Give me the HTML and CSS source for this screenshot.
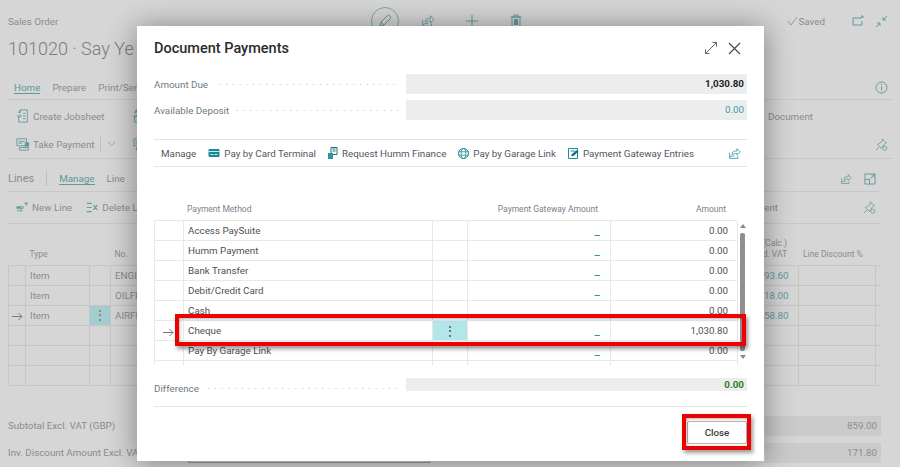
FILE: index.html
```html
<!DOCTYPE html>
<html lang="en">

<head>
    <meta charset="UTF-8">
    <meta name="viewport" content="width=device-width, initial-scale=1.0">
    <title>Document Payments</title>
    <link rel="stylesheet" href="styles.css">
</head>

<body>
    <svg class="defs" width="0" height="0">
        <symbol id="share" viewBox="0 0 16 16">
            <path d="M2 7v7h10v-3M2 12l3-1h3M5 9l1-3c1-1 3-1 5-1V2l4 4-4 4V8c-2 0-4 0-5 1z" fill="none" stroke="currentColor"/>
        </symbol>
        <symbol id="pin" viewBox="0 0 16 16">
            <path d="M9 1l5 5-2 1-3 4-1 2-5-5 2-1 4-3zM5 11l-4 4" fill="none" stroke="currentColor"/>
            <circle cx="12" cy="12.500" r="2.500" fill="#d6d6d6" stroke="currentColor"/>
        </symbol>
        <symbol id="sheet" viewBox="0 0 16 16">
            <path d="M5 1h8v14H3V8M5 1l-2 3h2z" fill="none" stroke="currentColor"/>
            <path d="M1 8h5M4 6l2 2-2 2M8 5h3M8 8h3M8 11h3" fill="none" stroke="currentColor"/>
        </symbol>
        <symbol id="till" viewBox="0 0 16 16">
            <path d="M1 2h11v8H1zM3 5h7M3 7h4M4 12h10v3H4z" fill="none" stroke="currentColor"/>
            <path d="M10 6h5v5h-5z" fill="currentColor"/>
        </symbol>
        <symbol id="newline" viewBox="0 0 16 16">
            <path d="M1 7h8v2H1zM1 12h7M6 9v4M10 3h5M12.500 1v5" fill="none" stroke="currentColor"/>
            <path d="M1 7h5v2H1z" fill="currentColor"/>
        </symbol>
        <symbol id="delline" viewBox="0 0 16 16">
            <path d="M1 3h6M1 8h6M1 13h6M9 5l5 6M14 5l-5 6" fill="none" stroke="currentColor" stroke-width="1.500"/>
        </symbol>
        <symbol id="rowarrow" viewBox="0 0 11 9">
            <path d="M0 4.500h10M6.500 1l3.500 3.500L6.500 8" fill="none" stroke="currentColor"/>
        </symbol>
    </svg>

    <div class="page">
        <header class="page-top">
            <span class="caption">Sales Order</span>
            <div class="top-actions">
                <span class="edit-ring">
                    <svg width="14" height="14" viewBox="0 0 14 14">
                        <path d="M2 12l1-4 6-6c1-1 2-1 3 0s1 2 0 3l-6 6zM3 8l3 3" fill="none" stroke="currentColor"/>
                    </svg>
                </span>
                <svg class="ico" width="14" height="14"><use href="#share"/></svg>
                <svg class="ico" width="14" height="14" viewBox="0 0 14 14">
                    <path d="M7 1v12M1 7h12" stroke="currentColor"/>
                </svg>
                <svg class="ico" width="14" height="14" viewBox="0 0 14 14">
                    <path d="M3 3h8v10H3zM5 3V1h4v2M1.500 3h11" fill="none" stroke="currentColor"/>
                    <path d="M5 5h4v6H5z" fill="currentColor"/>
                </svg>
            </div>
            <div class="top-right">
                <svg width="11" height="10" viewBox="0 0 11 10">
                    <path d="M1 5l3 4 6-8" fill="none" stroke="#8f9a9a"/>
                </svg>
                <span class="saved">Saved</span>
                <svg class="ico" width="13" height="12" viewBox="0 0 13 12">
                    <path d="M9 3H1v7h9V6M8 4l3-3M9 1h2v2" fill="none" stroke="currentColor"/>
                </svg>
                <svg class="ico" width="13" height="13" viewBox="0 0 13 13">
                    <path d="M1 12l4-4M2 8h3v3M12 1L8 5M8 2v3h3" fill="none" stroke="currentColor"/>
                </svg>
            </div>
        </header>

        <h1 class="page-title">101020 · Say Ye</h1>

        <nav class="tabs">
            <span class="tab tab-active">Home</span>
            <span class="tab">Prepare</span>
            <span class="tab">Print/Send</span>
            <svg class="ico tabs-info" width="13" height="13" viewBox="0 0 13 13">
                <circle cx="6.500" cy="6.500" r="5.500" fill="none" stroke="currentColor"/>
                <path d="M6.500 5.500v4M6.500 3v1.200" stroke="currentColor"/>
            </svg>
        </nav>

        <section class="ribbon">
            <div class="ribbon-row">
                <button class="bg-btn"><svg class="ico" width="14" height="14"><use href="#sheet"/></svg>Create Jobsheet</button>
                <svg class="ico ribbon-next" width="14" height="14"><use href="#sheet"/></svg>
                <span class="ribbon-doc">Document</span>
            </div>
            <div class="ribbon-row">
                <button class="bg-btn"><svg class="ico" width="14" height="14"><use href="#till"/></svg>Take Payment</button>
                <span class="sep"></span>
                <svg class="ico" width="9" height="6" viewBox="0 0 9 6">
                    <path d="M1 1l3.500 3.500L8 1" fill="none" stroke="#9aa"/>
                </svg>
                <svg class="ico ribbon-next2" width="14" height="14"><use href="#till"/></svg>
                <svg class="ico ribbon-pin" width="13" height="13"><use href="#pin"/></svg>
            </div>
        </section>

        <div class="lines-bar">
            <strong class="lines-title">Lines</strong>
            <span class="sep sep-tall"></span>
            <span class="tab tab-active">Manage</span>
            <span class="tab">Line</span>
            <svg class="ico lines-share" width="12" height="12"><use href="#share"/></svg>
            <svg class="ico" width="12" height="12" viewBox="0 0 13 13">
                <path d="M1 1h11v11H1zM1 7h5v5M7 6l4-4M8 2h3v3" fill="none" stroke="currentColor"/>
            </svg>
        </div>

        <div class="lines-actions">
            <button class="bg-btn"><svg class="ico" width="13" height="13"><use href="#newline"/></svg>New Line</button>
            <button class="bg-btn"><svg class="ico" width="13" height="13"><use href="#delline"/></svg>Delete Line</button>
            <span class="lines-ent">ent</span>
            <svg class="ico" width="13" height="13"><use href="#pin"/></svg>
        </div>

        <table class="bg-table">
            <colgroup>
                <col class="c-arrow"><col class="c-type"><col class="c-dots"><col class="c-no">
                <col class="c-amt"><col class="c-disc"><col class="c-end">
            </colgroup>
            <thead>
                <tr>
                    <th></th><th>Type</th><th></th><th>No.</th>
                    <th class="num">(Calc.)<br>d. VAT</th><th class="disc-head">Line Discount %</th><th></th>
                </tr>
            </thead>
            <tbody>
                <tr><td></td><td>Item</td><td></td><td>ENGINE</td><td class="num link">93.60</td><td></td><td></td></tr>
                <tr><td></td><td>Item</td><td></td><td>OILFILTER</td><td class="num link">18.00</td><td></td><td></td></tr>
                <tr><td class="arrow"><svg width="11" height="9"><use href="#rowarrow"/></svg></td><td>Item</td><td class="dots-cell">⋮</td><td>AIRFILTER</td><td class="num link">58.80</td><td></td><td></td></tr>
                <tr><td></td><td></td><td></td><td></td><td></td><td></td><td></td></tr>
                <tr><td></td><td></td><td></td><td></td><td></td><td></td><td></td></tr>
                <tr><td></td><td></td><td></td><td></td><td></td><td></td><td></td></tr>
            </tbody>
        </table>

        <div class="totals">
            <div class="total-row">
                <span class="total-label">Subtotal Excl. VAT (GBP)</span>
                <span class="total-value">859.00</span>
            </div>
            <div class="total-row">
                <span class="total-label">Inv. Discount Amount Excl. VAT</span>
                <span class="total-input"></span>
                <span class="total-value">171.80</span>
            </div>
        </div>
    </div>

    <div class="dialog">
        <div class="dialog-head">
            <h2 class="dialog-title">Document Payments</h2>
            <svg class="expand" width="14" height="14" viewBox="0 0 14 14">
                <path d="M1.500 12.500l11-11M8.500 1.500h4v4M1.500 8.500v4h4" fill="none" stroke="#666"/>
            </svg>
            <svg class="close-x" width="13" height="13" viewBox="0 0 13 13">
                <path d="M1 1l11 11M12 1L1 12" fill="none" stroke="#444" stroke-width="1.100"/>
            </svg>
        </div>

        <div class="field">
            <span class="field-label">Amount Due</span>
            <span class="leader"></span>
            <span class="field-value value-bold">1,030.80</span>
        </div>
        <div class="field">
            <span class="field-label">Available Deposit</span>
            <span class="leader"></span>
            <span class="field-value value-link">0.00</span>
        </div>

        <div class="actions">
            <span class="action action-first">Manage</span>
            <span class="action">
                <svg width="12" height="8" viewBox="0 0 11 8">
                    <rect width="11" height="8" rx="1" fill="#1c8a96"/>
                    <path d="M0 2.500h11" stroke="#fff" stroke-width=".8"/>
                    <path d="M2 5.500h3M6 5.500h3" stroke="#fff" stroke-width=".8"/>
                </svg>
                Pay by Card Terminal
            </span>
            <span class="action">
                <svg width="10" height="12" viewBox="0 0 10 12">
                    <path d="M3 .5h6v7H3z" fill="none" stroke="#1c6f7a"/>
                    <path d="M4.500 2h3M4.500 4h3" stroke="#1c6f7a"/>
                    <path d="M0 6h5v6H0z" fill="#2a97a3"/>
                </svg>
                Request Humm Finance
            </span>
            <span class="action">
                <svg width="11" height="11" viewBox="0 0 11 11">
                    <circle cx="5.500" cy="5.500" r="5" fill="none" stroke="#1c8a96"/>
                    <ellipse cx="5.500" cy="5.500" rx="2.300" ry="5" fill="none" stroke="#1c8a96" stroke-width=".8"/>
                    <path d="M.5 3.800h10M.5 7.200h10" stroke="#1c8a96" stroke-width=".8"/>
                </svg>
                Pay by Garage Link
            </span>
            <span class="action">
                <svg width="11" height="11" viewBox="0 0 11 11">
                    <path d="M.5.5h9v10h-9zM2.500 3h5" fill="none" stroke="#1c8a96"/>
                    <path d="M3 8l1-2 5-4 1.500 1.500-5 4.500z" fill="#1c6f7a"/>
                </svg>
                Payment Gateway Entries
            </span>
            <svg class="action-share" width="13" height="13"><use href="#share"/></svg>
        </div>

        <div class="grid-wrap">
            <div class="grid-head">
                <span class="gh-method">Payment Method</span>
                <span class="gh-gateway">Payment Gateway Amount</span>
                <span class="gh-amount">Amount</span>
            </div>
            <div class="grid-body">
                <table class="pay-table">
                    <colgroup>
                        <col class="p-arrow"><col class="p-method"><col class="p-dots"><col class="p-gate"><col class="p-amt">
                    </colgroup>
                    <tbody>
                        <tr><td></td><td>Access PaySuite</td><td></td><td class="gate">_</td><td class="num">0.00</td></tr>
                        <tr><td></td><td>Humm Payment</td><td></td><td class="gate">_</td><td class="num">0.00</td></tr>
                        <tr><td></td><td>Bank Transfer</td><td></td><td class="gate">_</td><td class="num">0.00</td></tr>
                        <tr><td></td><td>Debit/Credit Card</td><td></td><td class="gate">_</td><td class="num">0.00</td></tr>
                        <tr><td></td><td>Cash</td><td></td><td class="gate">_</td><td class="num">0.00</td></tr>
                        <tr><td class="arrow"><svg width="11" height="9"><use href="#rowarrow"/></svg></td><td>Cheque</td><td class="dots-on">⋮</td><td class="gate">_</td><td class="num">1,030.80</td></tr>
                        <tr><td></td><td>Pay By Garage Link</td><td></td><td class="gate">_</td><td class="num">0.00</td></tr>
                        <tr><td></td><td></td><td></td><td></td><td></td></tr>
                    </tbody>
                </table>
                <div class="scrollbar">
                    <span class="sb-up"></span>
                    <span class="sb-thumb"></span>
                    <span class="sb-down"></span>
                </div>
            </div>
        </div>

        <div class="field field-diff">
            <span class="field-label">Difference</span>
            <span class="leader"></span>
            <span class="field-value value-green">0.00</span>
        </div>

        <div class="dialog-foot">
            <button class="close-btn">Close</button>
        </div>
    </div>

    <!-- red marks drawn over the screenshot -->
    <div class="mark mark-row"></div>
    <div class="mark mark-close"></div>
</body>

</html>
```

FILE: styles.css
```css
* {
    padding: 0;
    margin: 0;
    box-sizing: border-box;
}

body {
    width: 900px;
    height: 467px;
    overflow: hidden;
    position: relative;
    background-color: #d6d6d6;
    font-family: Roboto, "Open Sans", sans-serif;
    font-size: 9.800px;
    color: #8c8c8c;
}

.defs {
    position: absolute;
}

.ico {
    color: #649a9c;
    flex: none;
}

/* page behind the dialog */
.page {
    padding: 12px 7px 0 8px;
}

.page-top {
    display: flex;
    align-items: center;
    height: 18px;
}

.caption {
    width: 363px;
}

.top-actions {
    display: flex;
    align-items: center;
    gap: 30px;
    color: #649a9c;
}

.edit-ring {
    width: 28px;
    height: 28px;
    margin-right: -8px;
    border: 1px solid #7ea8a8;
    border-radius: 50%;
    display: flex;
    align-items: center;
    justify-content: center;
}

.top-right {
    margin-left: auto;
    margin-right: 5px;
    display: flex;
    align-items: center;
}

.saved {
    margin: 0 27px 0 1px;
}

.top-right .ico + .ico {
    margin-left: 10px;
}

.page-title {
    margin-top: 4px;
    height: 30px;
    line-height: 30px;
    font-size: 18px;
    font-weight: 300;
    color: #7d7d7d;
    white-space: nowrap;
}

.tabs {
    margin-top: 12px;
    height: 24px;
    display: flex;
    align-items: center;
    gap: 12px;
    padding-left: 6px;
    border-bottom: 1px solid #c8c8c8;
}

.tab-active {
    color: #5a9a9c;
    border-bottom: 1px solid #5a9a9c;
}

.tabs-info {
    margin-left: auto;
    margin-right: 5px;
}

.ribbon {
    height: 59px;
    padding-top: 2px;
    border-bottom: 1px solid #c8c8c8;
}

.ribbon-row {
    position: relative;
    height: 28px;
    display: flex;
    align-items: center;
    padding-left: 8px;
}

.bg-btn {
    display: flex;
    align-items: center;
    gap: 3px;
    border: none;
    background: none;
    font: inherit;
    color: #8c8c8c;
    white-space: nowrap;
}

.ribbon-next {
    margin-left: 27px;
}

.ribbon-doc {
    margin-left: auto;
    margin-right: 80px;
}

.sep {
    width: 1px;
    height: 15px;
    margin: 0 6px 0 5px;
    background-color: #bdbdbd;
}

.ribbon-next2 {
    margin-left: 17px;
}

.ribbon-pin {
    margin-left: auto;
    margin-right: 5px;
}

.lines-bar {
    width: 873px;
    height: 33px;
    padding-top: 7px;
    display: flex;
    align-items: center;
    gap: 12px;
    border-bottom: 1px solid #c8c8c8;
}

.lines-title {
    font-weight: 400;
    font-size: 11px;
}

.sep-tall {
    margin: 0;
}

.lines-share {
    margin-left: auto;
}

.lines-bar > .ico:last-child {
    margin-right: 5px;
    margin-left: 0;
}

.lines-actions {
    width: 873px;
    height: 32px;
    display: flex;
    align-items: center;
    padding-left: 8px;
    border-bottom: 1px solid #c8c8c8;
}

.lines-actions .bg-btn + .bg-btn {
    margin-left: 14px;
}

.lines-ent {
    margin-left: auto;
    margin-right: 85px;
}

.lines-actions > .ico {
    margin-right: 5px;
}

.bg-table {
    width: 873px;
    table-layout: fixed;
    border-collapse: collapse;
}

.c-arrow { width: 17px; }
.c-type { width: 64px; }
.c-dots { width: 21px; }
.c-amt { width: 90px; }
.c-disc { width: 77px; }
.c-end { width: 6px; }

.bg-table th {
    height: 41px;
    padding: 0 4px 5px;
    vertical-align: bottom;
    text-align: left;
    font-weight: 400;
    font-size: 8.500px;
    line-height: 11px;
    white-space: nowrap;
}

.bg-table th.num {
    text-align: right;
    padding-right: 11px;
}

.bg-table th.disc-head {
    padding-left: 5px;
}

.bg-table td {
    height: 20px;
    padding: 0 4px;
    border: 1px solid #c6c6c6;
    white-space: nowrap;
    overflow: hidden;
}

.bg-table td:last-child {
    border-right: none;
}

.bg-table .num {
    text-align: right;
}

.bg-table td.num {
    padding-right: 9px;
}

.link {
    color: #619a9c;
}

.arrow {
    color: #7a7a7a;
}

.bg-table .arrow {
    padding: 5px 0 0 3px;
    line-height: 1;
}

.bg-table .dots-cell {
    background-color: #a4cdd0;
    text-align: center;
    font-size: 12px;
    line-height: 1;
    color: #6b6b6b;
}

.totals {
    margin-top: 30px;
    width: 873px;
    display: flex;
    flex-direction: column;
    gap: 7px;
}

.total-row {
    position: relative;
    height: 20px;
    display: flex;
    align-items: center;
}

.total-label {
    white-space: nowrap;
    width: 180px;
}

.total-input {
    width: 242px;
    height: 20px;
    border: 1px solid #9c9c9c;
}

.total-value {
    margin-left: auto;
    width: 116px;
    height: 20px;
    line-height: 20px;
    padding-right: 4px;
    text-align: right;
    background-color: #cbcbcb;
}

/* dialog */
.dialog {
    position: absolute;
    left: 137px;
    top: 26px;
    width: 627px;
    height: 435px;
    padding: 0 17px;
    background-color: #fff;
    color: #5f6b78;
    box-shadow: 0 2px 28px rgba(0, 0, 0, .42);
}

.dialog-head {
    height: 48px;
    padding-bottom: 4px;
    display: flex;
    align-items: center;
}

.dialog-title {
    font-size: 14.500px;
    font-weight: 500;
    color: #2b2b2b;
}

.expand {
    margin-left: auto;
    margin-right: 10px;
}

.close-x {
    margin-right: 6px;
}

.field {
    height: 20px;
    margin-bottom: 6px;
    display: flex;
    align-items: center;
    color: #6e7986;
}

.leader {
    flex: 1;
    height: 1px;
    margin: 1px 6px 0 6px;
    background-image: radial-gradient(circle, #b8bcc2 .6px, transparent .7px);
    background-size: 6.700px 2px;
    background-position: center;
}

.field-value {
    width: 341px;
    height: 20px;
    line-height: 20px;
    padding-right: 3px;
    text-align: right;
    background-color: #ecedef;
}

.value-bold {
    font-weight: 700;
    color: #1f1f1f;
}

.value-link {
    color: #3f9ba6;
}

.actions {
    margin-top: 19px;
    height: 28px;
    display: flex;
    align-items: center;
    gap: 12px;
    padding-left: 7px;
    border-top: 1px solid #e3e3e3;
    border-bottom: 1px solid #e3e3e3;
    color: #55555f;
}

.action {
    display: flex;
    align-items: center;
    gap: 4px;
    white-space: nowrap;
}

.action-share {
    margin-left: auto;
    margin-right: 6px;
    color: #2a97a3;
}

.grid-wrap {
    margin-top: 34px;
}

.grid-head {
    height: 19px;
    padding-bottom: 3px;
    display: flex;
    align-items: center;
    font-size: 8.500px;
    color: #7a838d;
}

.gh-method {
    width: 33px;
    padding-left: 33px;
    white-space: nowrap;
}

.gh-gateway {
    margin-left: auto;
    white-space: nowrap;
}

.gh-amount {
    width: 149px;
    padding-right: 21px;
    text-align: right;
    flex: none;
}

.grid-body {
    height: 145px;
    overflow: hidden;
    display: flex;
}

.pay-table {
    width: 583px;
    flex: none;
    align-self: flex-start;
    table-layout: fixed;
    border-collapse: collapse;
}

.p-arrow { width: 29px; }
.p-method { width: 249px; }
.p-dots { width: 35px; }
.p-gate { width: 143px; }
.p-amt { width: 127px; }

.pay-table td {
    height: 20px;
    padding: 0 4px;
    border: 1px solid #e8e8e8;
    color: #4f4f57;
    white-space: nowrap;
}

.pay-table .num {
    text-align: right;
    padding-right: 9px;
}

.pay-table .arrow {
    padding: 5px 0 0 8px;
    line-height: 1;
}

.pay-table .arrow svg {
    color: #777;
}

.pay-table .gate {
    text-align: right;
    padding-right: 10px;
    font-size: 12px;
    line-height: 1;
    color: #2f97a4;
}

.pay-table .dots-on {
    background-color: #b2e6ea;
    text-align: center;
    font-size: 12px;
    line-height: 1;
    color: #3c3c3c;
}

.scrollbar {
    flex: 1;
    height: 141px;
    display: flex;
    flex-direction: column;
    align-items: center;
    padding-top: 4px;
}

.sb-up {
    border: 3px solid transparent;
    border-top: none;
    border-bottom: 4px solid #8a8a8a;
}

.sb-thumb {
    width: 5px;
    height: 118px;
    margin: 5px 0 4px;
    border-radius: 2px;
    background-color: #8f8f8f;
}

.sb-down {
    border: 3px solid transparent;
    border-bottom: none;
    border-top: 4px solid #8a8a8a;
}

.field-diff {
    margin-top: 13px;
    margin-bottom: 0;
    height: 16px;
}

.field-diff .field-label {
    margin-top: 4px;
}

.field-diff .leader {
    margin-top: 5px;
}

.field-diff .field-value {
    height: 13px;
    line-height: 14px;
    align-self: flex-start;
}

.value-green {
    font-weight: 700;
    color: #2e7d1e;
}

.dialog-foot {
    margin-top: 12px;
    padding-top: 14px;
    display: flex;
    justify-content: flex-end;
    border-top: 1px solid #e3e3e3;
}

.close-btn {
    width: 60px;
    height: 23px;
    background-color: #fff;
    border: 1px solid #b5b5b5;
    border-radius: 2px;
    font: inherit;
    font-weight: 500;
    color: #3a3a3a;
}

.mark {
    position: absolute;
    border: 4px solid #ec0000;
    box-shadow: 2px 3px 4px rgba(0, 0, 0, .4), inset 1px 1px 3px rgba(0, 0, 0, .3);
}

.mark-row {
    left: 175px;
    top: 314px;
    width: 571px;
    height: 32px;
}

.mark-close {
    left: 682px;
    top: 414px;
    width: 69px;
    height: 36px;
}
```
